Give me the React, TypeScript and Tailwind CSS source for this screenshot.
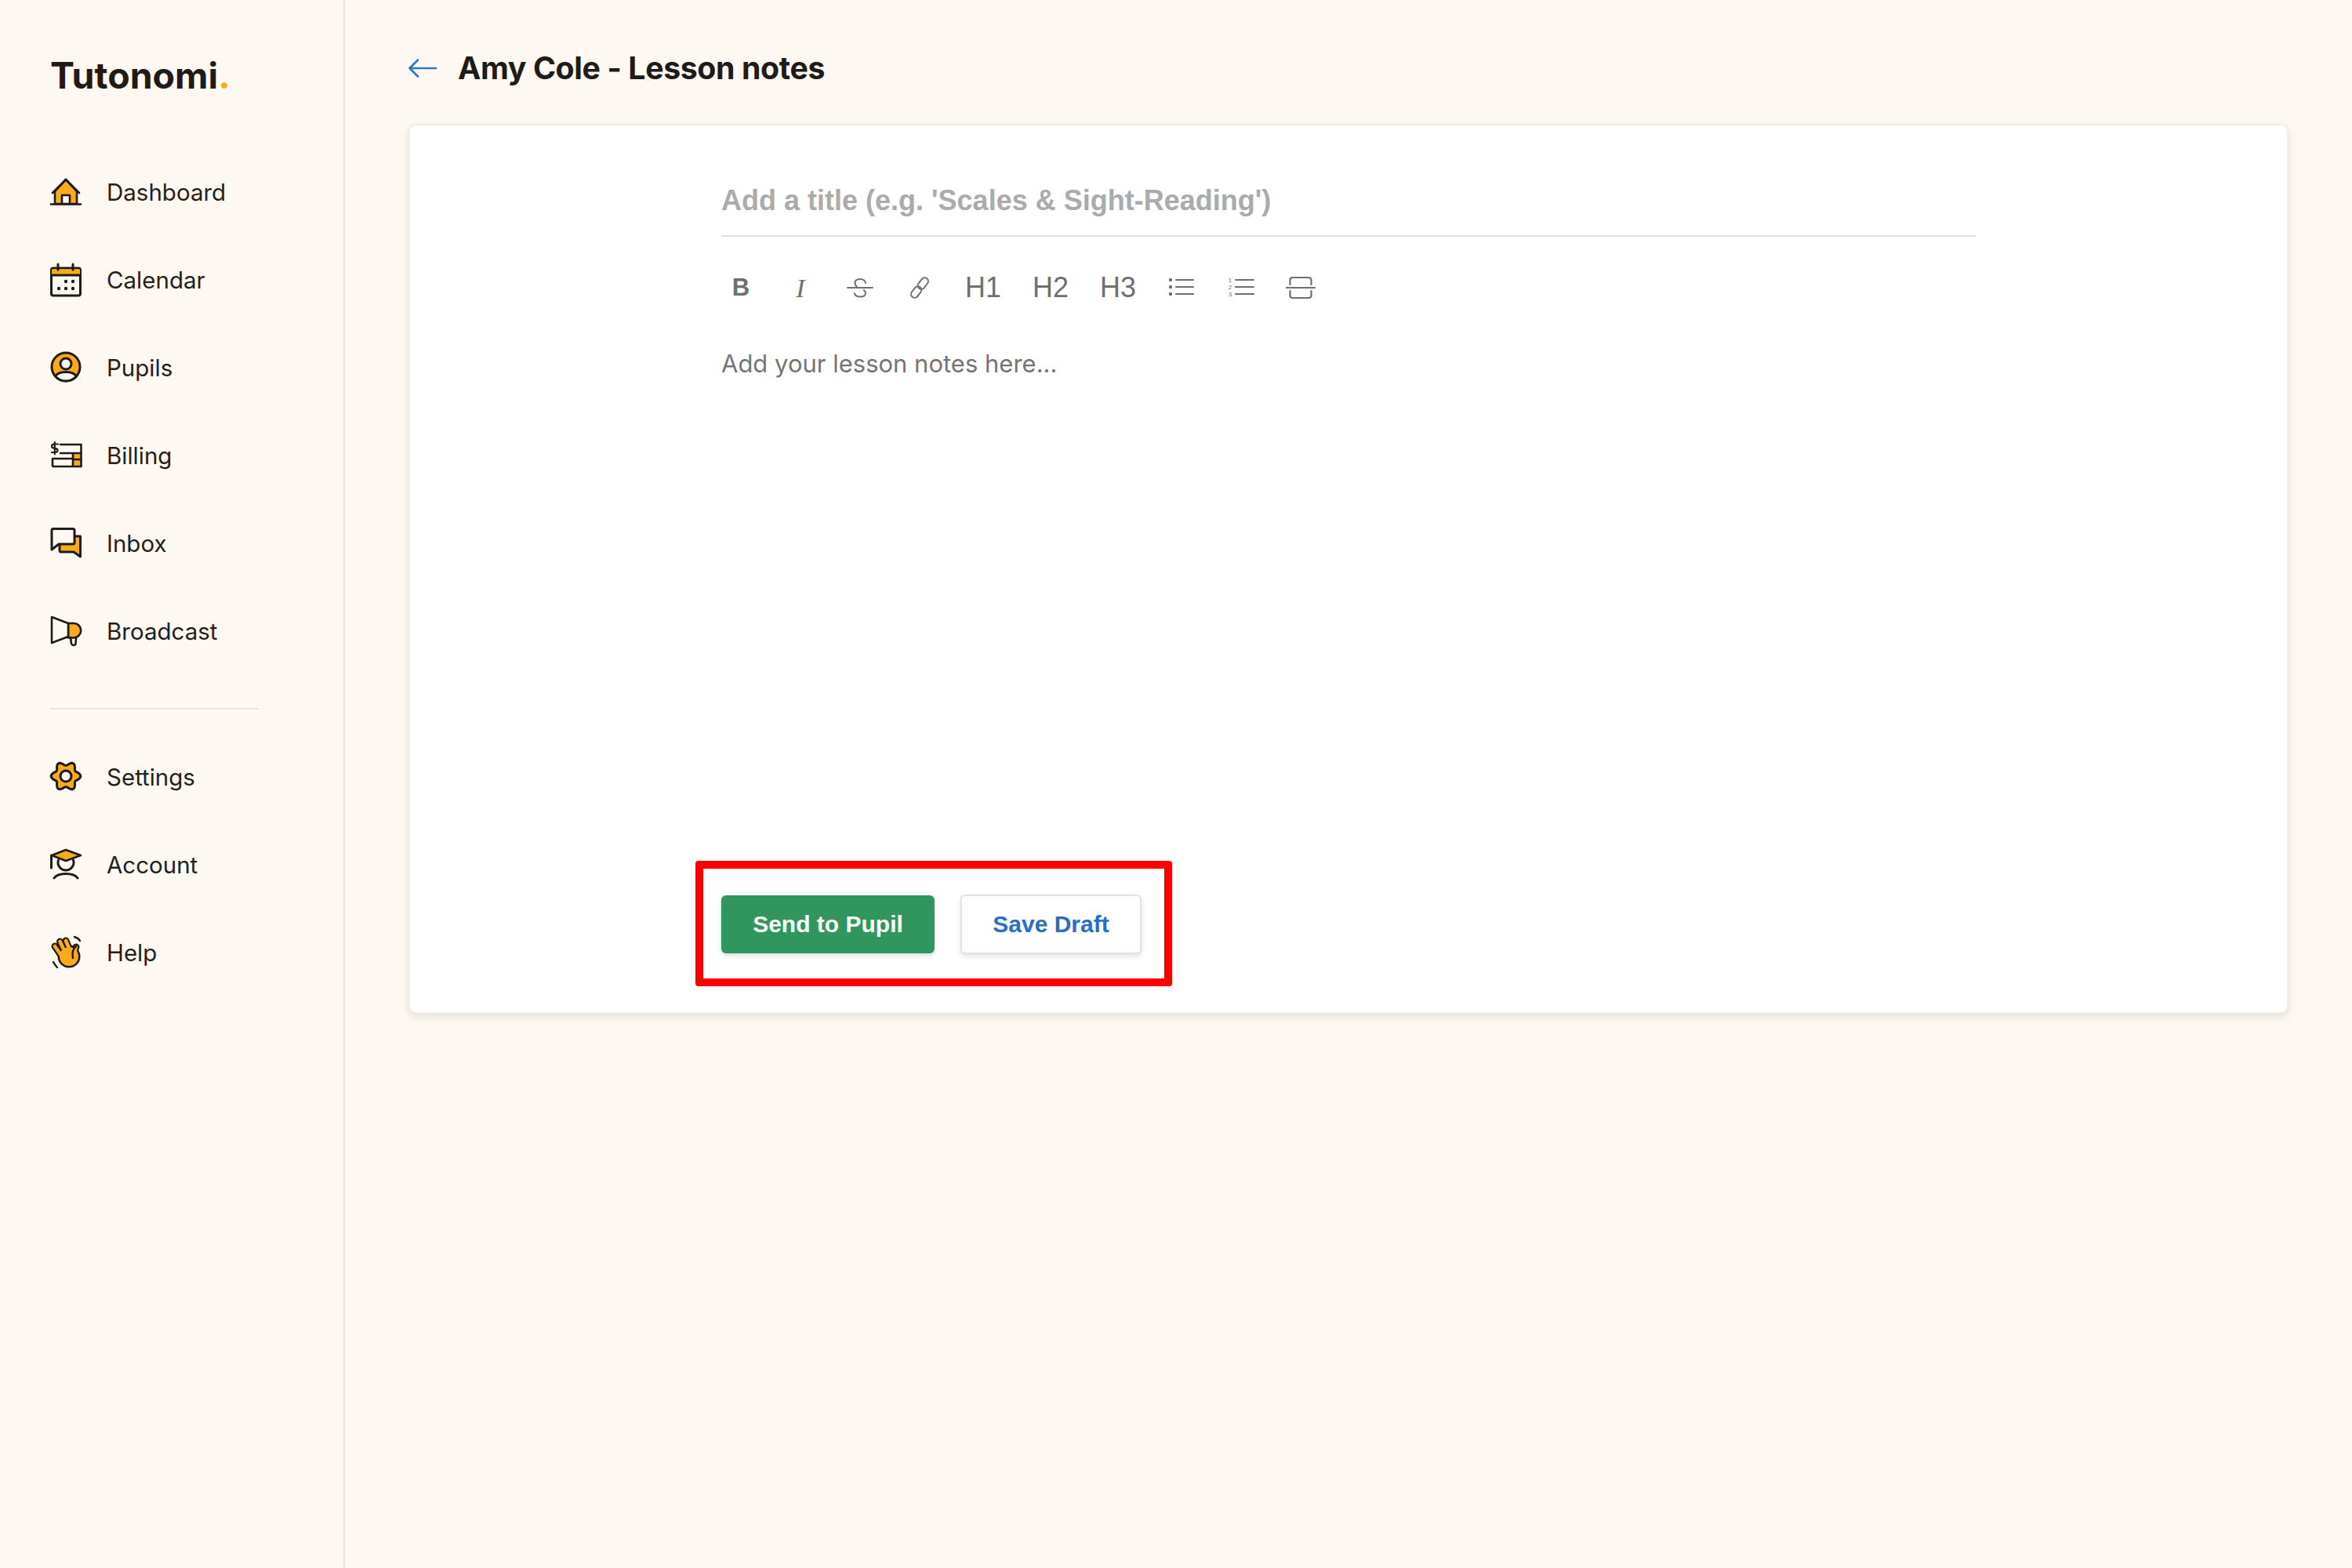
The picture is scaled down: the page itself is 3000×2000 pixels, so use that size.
import type { ReactNode } from 'react'

const ORANGE = '#f9ab1a'
const INK = '#1e1b18'
const PAGE = '#fdf8f2'

const Icon = ({ children }: { children: ReactNode }) => (
  <svg viewBox="0 0 40 40" className="h-10 w-10 shrink-0 overflow-visible" fill="none" stroke={INK} strokeWidth={3} strokeLinecap="round" strokeLinejoin="round">
    {children}
  </svg>
)

// 6 lobed cog outline
const cogPath = () => {
  const pts: string[] = []
  for (let i = 0; i < 72; i++) {
    const a = (i / 72) * Math.PI * 2
    const r = 16.2 + 2.6 * Math.cos(6 * a)
    pts.push(`${(20 + r * Math.cos(a)).toFixed(2)} ${(19 + r * Math.sin(a)).toFixed(2)}`)
  }
  return `M${pts.join('L')}Z`
}

const icons: Record<string, ReactNode> = {
  dashboard: (
    <>
      <path d="M6 19 L20 4 L34 19 V35 H6 Z" fill={ORANGE} strokeWidth={2.6} />
      <path d="M3 21 L20 4 L37 21" strokeWidth={2.6} />
      <path d="M1 35.5 H39" strokeWidth={2.6} />
      <path d="M15 35 V24 H25 V35 Z" fill={PAGE} strokeWidth={2.6} />
    </>
  ),
  calendar: (
    <>
      <rect x="1.5" y="5" width="37" height="35" rx="2.5" fill={PAGE} />
      <path d="M2 6.5 H38 V14 H2 Z" fill={ORANGE} stroke="none" />
      <path d="M2 14 H38" />
      <path d="M10 0 V7 M29 0 V7" />
      <g fill={INK} stroke="none">
        <circle cx="11" cy="31" r="2.2" />
        <circle cx="20" cy="31" r="2.2" />
        <circle cx="29" cy="31" r="2.2" />
        <circle cx="20" cy="22" r="2.2" />
        <circle cx="29" cy="22" r="2.2" />
      </g>
    </>
  ),
  pupils: (
    <>
      <circle cx="20" cy="19" r="18" fill={ORANGE} />
      <path d="M6.5 31 C11 23.5 29 23.5 33.5 31 C26 39 14 39 6.5 31 Z" fill={PAGE} />
      <circle cx="20" cy="15" r="7" fill={PAGE} />
    </>
  ),
  billing: (
    <>
      <path d="M29 16.5 H39.5 V33.5 H29 Z" fill={ORANGE} stroke="none" />
      <path d="M13 6 H39.5 V34 H4 Q3 34 3 33 V24 H29 M13 17 H39.5 M29 17 V34 M30 25 H39" strokeWidth={2.6} />
      <path d="M10 5.5 H5 Q2 5.5 2 8.2 Q2 10.5 5.5 10.8 Q9.5 11 9.5 13.6 Q9.5 16 6 16 H2 M5.8 3 V18.5" strokeWidth={2.2} />
    </>
  ),
  inbox: (
    <>
      <path d="M12 21 V11 H38.5 V37 L30 31 H14 Q12 31 12 29 Z" fill={ORANGE} />
      <path d="M2 3.5 Q2 1.5 4 1.5 H29 Q31 1.5 31 3.5 V19 Q31 21 29 21 H11 L2 28 Z" fill={PAGE} />
    </>
  ),
  broadcast: (
    <>
      <path d="M23 10 H30 A9.2 9.2 0 0 1 30 28.5 H23 Z" fill={ORANGE} strokeWidth={2.6} />
      <path d="M2 2 L23 10 V27 L2 35 Z" fill={PAGE} strokeWidth={2.6} />
      <path d="M26 28 L27 36 Q28 38 30 38 Q32 38 32.5 36 L33 28" strokeWidth={2.6} />
    </>
  ),
  settings: (
    <>
      <path d={cogPath()} fill={ORANGE} />
      <circle cx="20" cy="19" r="7" fill={PAGE} />
    </>
  ),
  account: (
    <>
      <path d="M10.5 14 A10 10 0 1 0 29.5 14" />
      <path d="M5 37 C10 29.5 30 29.5 35 37" />
      <path d="M20 1 L39 8 L20 15 L2 8 Z" fill={ORANGE} strokeWidth={2.6} />
      <path d="M1.5 8 V24" />
    </>
  ),
  help: (
    <>
      <path d="M6 12 L15 25 M12.5 6 L20 22 M20 5 L26 19 M33 13 L29 24" stroke={INK} strokeWidth={9} />
      <circle cx="24" cy="25" r="14.5" fill={INK} stroke="none" />
      <path d="M6 12 L15 25 M12.5 6 L20 22 M20 5 L26 19 M33 13 L29 24" stroke={ORANGE} strokeWidth={4.6} />
      <circle cx="24" cy="25" r="12" fill={ORANGE} stroke="none" />
      <path d="M33 12 Q27 17 29 27" stroke={INK} strokeWidth={2.4} />
      <path d="M31 0 Q36 1.5 38 5 M4 32 Q6 36 9 39" strokeWidth={2.4} />
    </>
  ),
}

const primaryNav = [
  { id: 'dashboard', label: 'Dashboard' },
  { id: 'calendar', label: 'Calendar' },
  { id: 'pupils', label: 'Pupils' },
  { id: 'billing', label: 'Billing' },
  { id: 'inbox', label: 'Inbox' },
  { id: 'broadcast', label: 'Broadcast' },
]

const secondaryNav = [
  { id: 'settings', label: 'Settings' },
  { id: 'account', label: 'Account' },
  { id: 'help', label: 'Help' },
]

const NavItem = ({ id, label }: { id: string; label: string }) => (
  <a className="flex h-[112px] items-center gap-[32px] text-[29.5px] text-[#221f1c]">
    <Icon>{icons[id]}</Icon>
    <span>{label}</span>
  </a>
)

const ToolIcon = ({ children }: { children: ReactNode }) => (
  <button className="flex h-[50px] w-[50px] items-center justify-center">{children}</button>
)

const Heading = ({ children }: { children: ReactNode }) => (
  <button className="flex h-[50px] w-[60px] items-center justify-center font-['Liberation_Sans',sans-serif] text-[36px] text-[#6f6f6f]">
    {children}
  </button>
)

const toolSvg = 'h-10 w-10 overflow-visible'

const Toolbar = () => (
  <div className="mt-[40px] flex items-center gap-[26px]">
    <ToolIcon>
      <span className="font-['Liberation_Sans',sans-serif] text-[31px] font-bold text-[#6f6f6f]">B</span>
    </ToolIcon>
    <ToolIcon>
      <span className="font-['Liberation_Serif',serif] text-[34px] italic text-[#6f6f6f]">I</span>
    </ToolIcon>
    <ToolIcon>
      <svg viewBox="0 0 40 40" className={toolSvg} fill="none" stroke="#6f6f6f" strokeWidth={2} strokeLinecap="round">
        <path d="M4 20 H36" />
        <path d="M27 14 Q26 9 20 9 Q13.5 9 13.5 14 Q13.5 17 16 19" />
        <path d="M25 23 Q27 25 27 27 Q27 31.5 20 31.5 Q14 31.5 13 27" />
      </svg>
    </ToolIcon>
    <ToolIcon>
      <svg viewBox="0 0 40 40" className={toolSvg} fill="none" stroke="#6f6f6f" strokeWidth={2} strokeLinecap="round">
        <g transform="rotate(38 20 20)">
          <rect x="15.5" y="5" width="9" height="16" rx="4.5" />
          <rect x="15.5" y="19" width="9" height="16" rx="4.5" />
        </g>
      </svg>
    </ToolIcon>
    <Heading>H1</Heading>
    <Heading>H2</Heading>
    <Heading>H3</Heading>
    <ToolIcon>
      <svg viewBox="0 0 40 40" className={toolSvg} fill="none" stroke="#6f6f6f" strokeWidth={2.2} strokeLinecap="round">
        <path d="M13 10 H35 M13 19 H35 M13 28 H35" />
        <g fill="#6f6f6f" stroke="none">
          <circle cx="6" cy="10" r="2.2" />
          <circle cx="6" cy="19" r="2.2" />
          <circle cx="6" cy="28" r="2.2" />
        </g>
      </svg>
    </ToolIcon>
    <ToolIcon>
      <svg viewBox="0 0 40 40" className={toolSvg} fill="none" stroke="#6f6f6f" strokeWidth={2.2} strokeLinecap="round">
        <path d="M13 10 H36 M13 19 H36 M13 28 H36" />
        <g fill="#6f6f6f" stroke="none" fontSize="8" fontFamily="Liberation Sans, sans-serif" textAnchor="middle">
          <text x="6" y="13">1</text>
          <text x="6" y="22">2</text>
          <text x="6" y="31">3</text>
        </g>
      </svg>
    </ToolIcon>
    <ToolIcon>
      <svg viewBox="0 0 40 40" className={toolSvg} fill="none" stroke="#6f6f6f" strokeWidth={2.2} strokeLinecap="round">
        <path d="M2 20 H38" />
        <path d="M6.5 16 V10 Q6.5 7 10 7 H30 Q33.5 7 33.5 10 V16" />
        <path d="M6.5 24 V30 Q6.5 33 10 33 H30 Q33.5 33 33.5 30 V24" />
      </svg>
    </ToolIcon>
  </div>
)

const Sidebar = () => (
  <aside className="flex min-h-[2000px] w-[440px] shrink-0 flex-col border-r-[2px] border-[#eae5de] pl-[64px]">
    <div className="flex h-[189px] items-start pt-[64px] text-[46.5px] leading-[64px] font-bold text-[#1e1b18]">
      <span>
        Tutonomi<span className="text-[#f9ab1a]">.</span>
      </span>
    </div>
    <nav className="flex flex-col">
      {primaryNav.map((item) => (
        <NavItem key={item.id} {...item} />
      ))}
    </nav>
    <div className="mt-[42px] mb-[30px] h-[2px] w-[266px] bg-[#eae5de]" />
    <nav className="flex flex-col">
      {secondaryNav.map((item) => (
        <NavItem key={item.id} {...item} />
      ))}
    </nav>
  </aside>
)

export default function App() {
  return (
    <div className="flex min-h-[2000px] bg-[#fdf8f2] font-['Inter',sans-serif]">
      <Sidebar />

      <main className="flex-1 pr-[81px] pl-[81px]">
        {/* Header */}
        <header className="flex h-[158px] items-center gap-[27px] pt-[16px]">
          <svg viewBox="0 0 36 24" className="h-6 w-9" fill="none" stroke="#2f78c4" strokeWidth={2.6} strokeLinecap="round" strokeLinejoin="round">
            <path d="M1.5 12 H35 M12 1.5 L1.5 12 L12 22.5" />
          </svg>
          <h1 className="text-[39.3px] font-bold tracking-[-0.4px] text-[#1e1b18]">Amy Cole - Lesson notes</h1>
        </header>

        {/* Editor card */}
        <section className="flex h-[1135px] flex-col rounded-[10px] border-[2px] border-[#f1ede7] bg-white pb-[74px] shadow-[0_4px_10px_rgba(120,110,90,0.18)]">
          <div className="mx-auto flex w-[1600px] flex-1 flex-col">
            <div className="flex h-[142px] items-end border-b-[2px] border-[#e3e1dd] pb-[20px] font-['Liberation_Sans',sans-serif] text-[36px] leading-[48px] font-bold text-[#ababab]">
              Add a title (e.g. 'Scales &amp; Sight-Reading')
            </div>
            <Toolbar />
            <p className="mt-[49px] text-[31px] leading-[46px] text-[#757575]">Add your lesson notes here...</p>

            {/* Actions */}
            <div className="relative mt-auto flex items-center gap-[33px] font-['Liberation_Sans',sans-serif] text-[30px] font-bold">
              <button className="h-[74px] w-[272px] rounded-[6px] bg-[#31965d] pb-[2px] text-white shadow-[0_3px_6px_rgba(60,100,70,0.2)]">Send to Pupil</button>
              <button className="h-[76px] w-[231px] rounded-[6px] border-[2px] border-[#e5e2dd] bg-white pb-[2px] text-[#2a6dc4] shadow-[0_3px_6px_rgba(60,60,60,0.15)]">Save Draft</button>
              <div className="absolute top-[-43px] bottom-[-41px] left-[-33px] w-[608px] rounded-[4px] border-[10px] border-[#fe0000]" />
            </div>
          </div>
        </section>
      </main>
    </div>
  )
}
